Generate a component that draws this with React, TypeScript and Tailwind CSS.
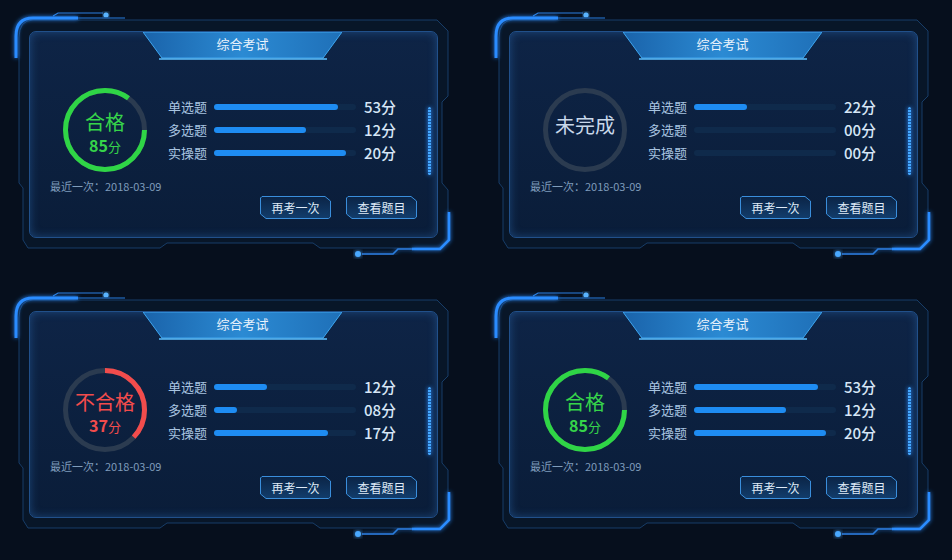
import React from "react";

type Row = { label: string; value: string; pct: number };
type CardData = {
  status: string;
  textClass: string;
  color: string;
  score?: string;
  pct: number;
  start: number;
  rows: Row[];
};

const pass: CardData = {
  status: "合格",
  textClass: "text-[#36d44a]",
  color: "#2fd546",
  score: "85",
  pct: 0.85,
  start: 90,
  rows: [
    { label: "单选题", value: "53分", pct: 0.87 },
    { label: "多选题", value: "12分", pct: 0.65 },
    { label: "实操题", value: "20分", pct: 0.93 },
  ],
};

const cards: CardData[] = [
  pass,
  {
    status: "未完成",
    textClass: "text-[#c8d8ea]",
    color: "#c8d8ea",
    pct: 0,
    start: 0,
    rows: [
      { label: "单选题", value: "22分", pct: 0.37 },
      { label: "多选题", value: "00分", pct: 0 },
      { label: "实操题", value: "00分", pct: 0 },
    ],
  },
  {
    status: "不合格",
    textClass: "text-[#f24c4c]",
    color: "#f24c4c",
    score: "37",
    pct: 0.37,
    start: 0,
    rows: [
      { label: "单选题", value: "12分", pct: 0.37 },
      { label: "多选题", value: "08分", pct: 0.16 },
      { label: "实操题", value: "17分", pct: 0.8 },
    ],
  },
  pass,
];

function Frame({ id }: { id: number }) {
  const f = `glow${id}`;
  return (
    <svg className="absolute inset-0" width="480" height="280" viewBox="0 0 480 280">
      <defs>
        <filter id={f} x="-20%" y="-20%" width="140%" height="140%">
          <feGaussianBlur stdDeviation="2" result="b" />
          <feMerge>
            <feMergeNode in="b" />
            <feMergeNode in="SourceGraphic" />
          </feMerge>
        </filter>
      </defs>
      <path
        d="M33 20 L437 20 L448 31 L448 96 L442 102 L442 183 L448 190 L448 240 L440 248 L320 248 L313 243 L167 243 L160 248 L28 248 L23 240 L23 188 L19 183 L19 38 Q19 20 33 20 Z"
        fill="#081628"
        stroke="#173d68"
        strokeWidth="1"
      />
      <path d="M53 16 L58 13 L103 13" fill="none" stroke="#2a7fe0" strokeWidth="1.2" />
      <circle cx="106" cy="15" r="2.6" fill="#5ab4ff" filter={`url(#${f})`} />
      <path
        d="M16 58 L16 36 Q16 18 33 18 L78 18"
        fill="none"
        stroke="#2c8cff"
        strokeWidth="3"
        filter={`url(#${f})`}
      />
      <path d="M78 18 L125 18" fill="none" stroke="#1d5aa0" strokeWidth="1.5" />
      <path
        d="M449 212 L449 240 L440 249 L412 249"
        fill="none"
        stroke="#2c8cff"
        strokeWidth="2.6"
        filter={`url(#${f})`}
      />
      <path
        d="M412 249 L398 249 L393 254 L362 254"
        fill="none"
        stroke="#2a7ee0"
        strokeWidth="1.6"
        filter={`url(#${f})`}
      />
      <circle cx="358" cy="254" r="3" fill="#4aa8ff" filter={`url(#${f})`} />
    </svg>
  );
}

function Ring({ c }: { c: CardData }) {
  const r = 39.5;
  const len = 2 * Math.PI * r;
  return (
    <div className="relative h-[84px] w-[84px] shrink-0">
      <svg className="absolute inset-0" width="84" height="84" viewBox="0 0 84 84">
        <circle cx="42" cy="42" r={r} fill="none" stroke="#2b3b50" strokeWidth="5" />
        {c.pct > 0 && (
          <circle
            cx="42"
            cy="42"
            r={r}
            fill="none"
            stroke={c.color}
            strokeWidth="5"
            strokeDasharray={`${len * c.pct} ${len}`}
            transform={`rotate(${c.start - 90} 42 42)`}
          />
        )}
      </svg>
      <div
        className={`relative flex h-full flex-col items-center justify-center ${c.textClass} ${
          c.score ? "pt-[6px]" : "pb-[10px]"
        }`}
      >
        <div className="text-[20px] leading-[22px]">{c.status}</div>
        {c.score && (
          <div className="mt-[3px] flex items-baseline leading-[18px]">
            <span className="text-[16px] font-semibold leading-[18px]">{c.score}</span>
            <span className="text-[13px] leading-[18px]">分</span>
          </div>
        )}
      </div>
    </div>
  );
}

function Btn({ text }: { text: string }) {
  return (
    <div className="relative flex h-[23px] w-[71px] items-center justify-center text-[12px] text-[#dfeaf7]">
      <svg className="absolute inset-0" width="71" height="23" viewBox="0 0 71 23">
        <defs>
          <linearGradient id="btng" x1="0" y1="0" x2="0" y2="1">
            <stop offset="0" stopColor="#0b2446" />
            <stop offset="1" stopColor="#123d6c" />
          </linearGradient>
        </defs>
        <polygon
          points="2,0.5 65,0.5 70.5,5 70.5,21 68.5,22.5 6,22.5 0.5,18 0.5,2"
          fill="url(#btng)"
          stroke="#3a8edc"
          strokeWidth="1"
        />
      </svg>
      <span className="relative">{text}</span>
    </div>
  );
}

function Card({ c, id }: { c: CardData; id: number }) {
  return (
    <div className="relative h-[280px] w-[480px]">
      <Frame id={id} />
      <div className="relative ml-[29px] mt-[31px] h-[207px] w-[409px] rounded-[7px] border border-[#21508a] bg-gradient-to-b from-[#0e2446] to-[#0a1d39] shadow-[inset_0_0_10px_rgba(60,140,230,0.35)]">
        <div className="flex flex-col">
          <div className="relative ml-[113px] h-[28px] w-[199px]">
            <svg className="absolute inset-0" width="199" height="28" viewBox="0 0 199 28">
              <defs>
                <linearGradient id={`tab${id}`} x1="0" y1="0" x2="1" y2="0">
                  <stop offset="0" stopColor="#1a63aa" />
                  <stop offset="0.5" stopColor="#2b8ad3" />
                  <stop offset="1" stopColor="#1f70b8" />
                </linearGradient>
              </defs>
              <polygon points="0,0 199,0 180,26 19,26" fill={`url(#tab${id})`} stroke="#3ea6f0" strokeWidth="1" />
              <line x1="16" y1="27" x2="184" y2="27" stroke="#5cc0ff" strokeWidth="1.5" />
            </svg>
            <div className="relative flex h-[24px] items-center justify-center text-[13px] text-[#e8f2fc]">
              综合考试
            </div>
          </div>
          <div className="ml-[33px] mt-[28px] flex items-center">
            <Ring c={c} />
            <div className="ml-[21px] flex flex-col">
              {c.rows.map((r, i) => (
                <div key={i} className="flex h-[23px] items-center">
                  <span className="w-[40px] text-[13px] text-[#a8c4e0]">{r.label}</span>
                  <div className="ml-[6px] h-[6px] w-[142px] rounded-full bg-[#0f2a4b]">
                    <div className="h-full rounded-full bg-[#1e8cf2]" style={{ width: `${r.pct * 100}%` }} />
                  </div>
                  <span className="ml-[8px] text-[15px] font-medium text-[#d6e6f6]">{r.value}</span>
                </div>
              ))}
            </div>
          </div>
          <div className="ml-[20px] mt-[7px] text-[11px] leading-[14px] text-[#7f9cbb]">最近一次：2018-03-09</div>
          <div className="mt-[3px] flex justify-end gap-[15px] pr-[20px]">
            <Btn text="再考一次" />
            <Btn text="查看题目" />
          </div>
        </div>
        <div className="absolute left-[398px] top-[75px] h-[68px] w-[3px] rounded-full bg-[repeating-linear-gradient(to_bottom,#46a8ff_0px,#46a8ff_2px,#1b5ea6_2px,#1b5ea6_3px)] shadow-[0_0_4px_#2a8cff]" />
      </div>
    </div>
  );
}

export default function App() {
  return (
    <div className="grid h-[560px] w-[952px] grid-cols-[480px_480px] grid-rows-[280px_280px] overflow-hidden bg-[#060f1d] font-['Noto_Sans_CJK_SC',sans-serif]">
      {cards.map((c, i) => (
        <Card key={i} c={c} id={i} />
      ))}
    </div>
  );
}
